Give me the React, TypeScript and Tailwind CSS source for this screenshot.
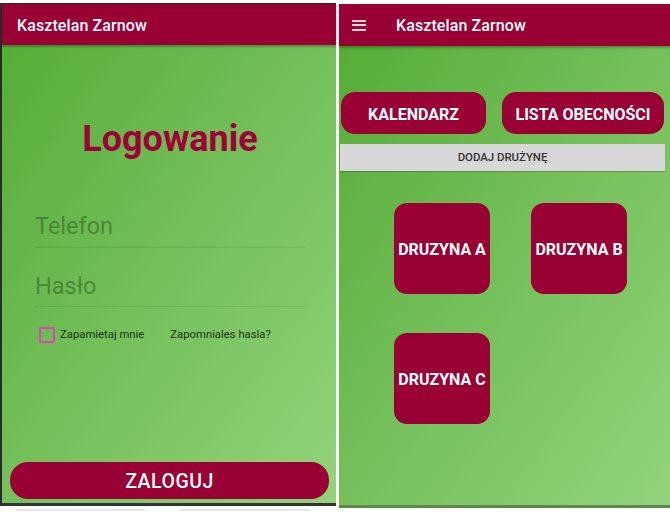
import React from "react";

const font = { fontFamily: "Roboto, 'Liberation Sans', sans-serif" };

function LeftPanel() {
  return (
    <div className="flex flex-col w-[336px] mt-[3px] h-[503px] border-t border-l-2 border-[#2a2a2a] border-b-[3px] border-b-[#333]">
      <div className="h-[41px] bg-[#990033] flex items-center pl-[15px] pt-[2px] shadow-[0_2px_2px_rgba(0,0,0,0.25)] z-10">
        <span className="text-white text-[16px] font-medium tracking-[0.1px]">Kasztelan Zarnow</span>
      </div>
      <div className="flex-1 flex flex-col bg-linear-to-br from-[#55ad36] to-[#93d37c]">
        <div className="mt-[74px] h-[40px] leading-[40px] text-center text-[36px] font-bold text-[#a00038] pl-[2px]">
          Logowanie
        </div>
        <div className="mt-[52px] ml-[32px] w-[271px]">
          <div className="h-[30px] leading-[30px] text-[23.5px] text-[rgba(30,70,20,0.45)] pl-[1px]">Telefon</div>
          <div className="mt-[6px] h-px bg-[rgba(0,0,0,0.08)]" />
        </div>
        <div className="mt-[23px] ml-[32px] w-[271px]">
          <div className="h-[30px] leading-[30px] text-[23.5px] text-[rgba(30,70,20,0.45)] pl-[1px]">Hasło</div>
          <div className="mt-[5px] h-px bg-[rgba(0,0,0,0.08)]" />
        </div>
        <div className="mt-[20px] ml-[37px] flex items-center h-[16px]">
          <div className="w-[16px] h-[16px] border-2 border-[#e040b8] rounded-[2px]" />
          <span className="ml-[5px] text-[11.3px] text-[#1f3317]">Zapamietaj mnie</span>
          <span className="ml-[26px] text-[11.3px] text-[#1f3317]">Zapomniales hasla?</span>
        </div>
        <div className="mt-auto mb-[4px] ml-[8px] w-[319px] h-[37px] rounded-[18px] bg-[#990033] flex items-center justify-center pt-[3px]">
          <span className="text-white text-[19.5px] font-medium tracking-[0.5px]">ZALOGUJ</span>
        </div>
      </div>
    </div>
  );
}

function Tile({ label }: { label: string }) {
  return (
    <div className="w-[96px] h-[91px] rounded-[13px] bg-[#990033] flex items-center justify-center pt-[3px]">
      <span className="text-white text-[16px] font-bold whitespace-nowrap">{label}</span>
    </div>
  );
}

function RightPanel() {
  return (
    <div className="flex flex-col w-[331px] mt-[4px] h-[504px] border-b-[3px] border-b-[#5a8a48]">
      <div className="h-[42px] bg-[#990033] flex items-center shadow-[0_2px_2px_rgba(0,0,0,0.25)] z-10">
        <div className="ml-[13px] w-[14px] flex flex-col gap-[2.5px]">
          <div className="h-[2px] bg-[#f3d6de]" />
          <div className="h-[2px] bg-[#f3d6de]" />
          <div className="h-[2px] bg-[#f3d6de]" />
        </div>
        <span className="ml-[30px] pt-[1px] text-white text-[16px] font-medium tracking-[0.1px]">Kasztelan Zarnow</span>
      </div>
      <div className="flex-1 flex flex-col bg-linear-to-br from-[#55ad36] to-[#93d37c]">
        <div className="mt-[46px] ml-[2px] flex gap-[16px]">
          <div className="w-[145px] h-[42px] rounded-[14px] bg-[#990033] flex items-center justify-center pt-[3px]">
            <span className="text-white text-[16px] font-bold">KALENDARZ</span>
          </div>
          <div className="w-[162px] h-[42px] rounded-[14px] bg-[#990033] flex items-center justify-center pt-[3px]">
            <span className="text-white text-[16px] font-bold whitespace-nowrap">LISTA OBECNOŚCI</span>
          </div>
        </div>
        <div className="mt-[10px] ml-[1px] w-[325px] h-[27px] bg-[#d8d8d8] flex items-center justify-center pt-[1px] shadow-[0_1px_1px_rgba(0,0,0,0.2)]">
          <span className="text-[#333] text-[11.4px] font-medium">DODAJ DRUŻYNĘ</span>
        </div>
        <div className="mt-[32px] ml-[55px] grid grid-cols-[96px_96px] gap-x-[41px] gap-y-[39px]">
          <Tile label="DRUZYNA A" />
          <Tile label="DRUZYNA B" />
          <Tile label="DRUZYNA C" />
        </div>
      </div>
    </div>
  );
}

export default function App() {
  return (
    <div className="w-[670px] h-[513px] bg-white relative overflow-hidden" style={font}>
      <div className="flex">
        <LeftPanel />
        <div className="w-[3px]" />
        <RightPanel />
      </div>
      <div className="absolute left-[15px] top-[509px] w-[130px] h-[2px] rounded-full bg-[#e6e6e6]" />
      <div className="absolute left-[180px] top-[509px] w-[130px] h-[2px] rounded-full bg-[#e6e6e6]" />
    </div>
  );
}
